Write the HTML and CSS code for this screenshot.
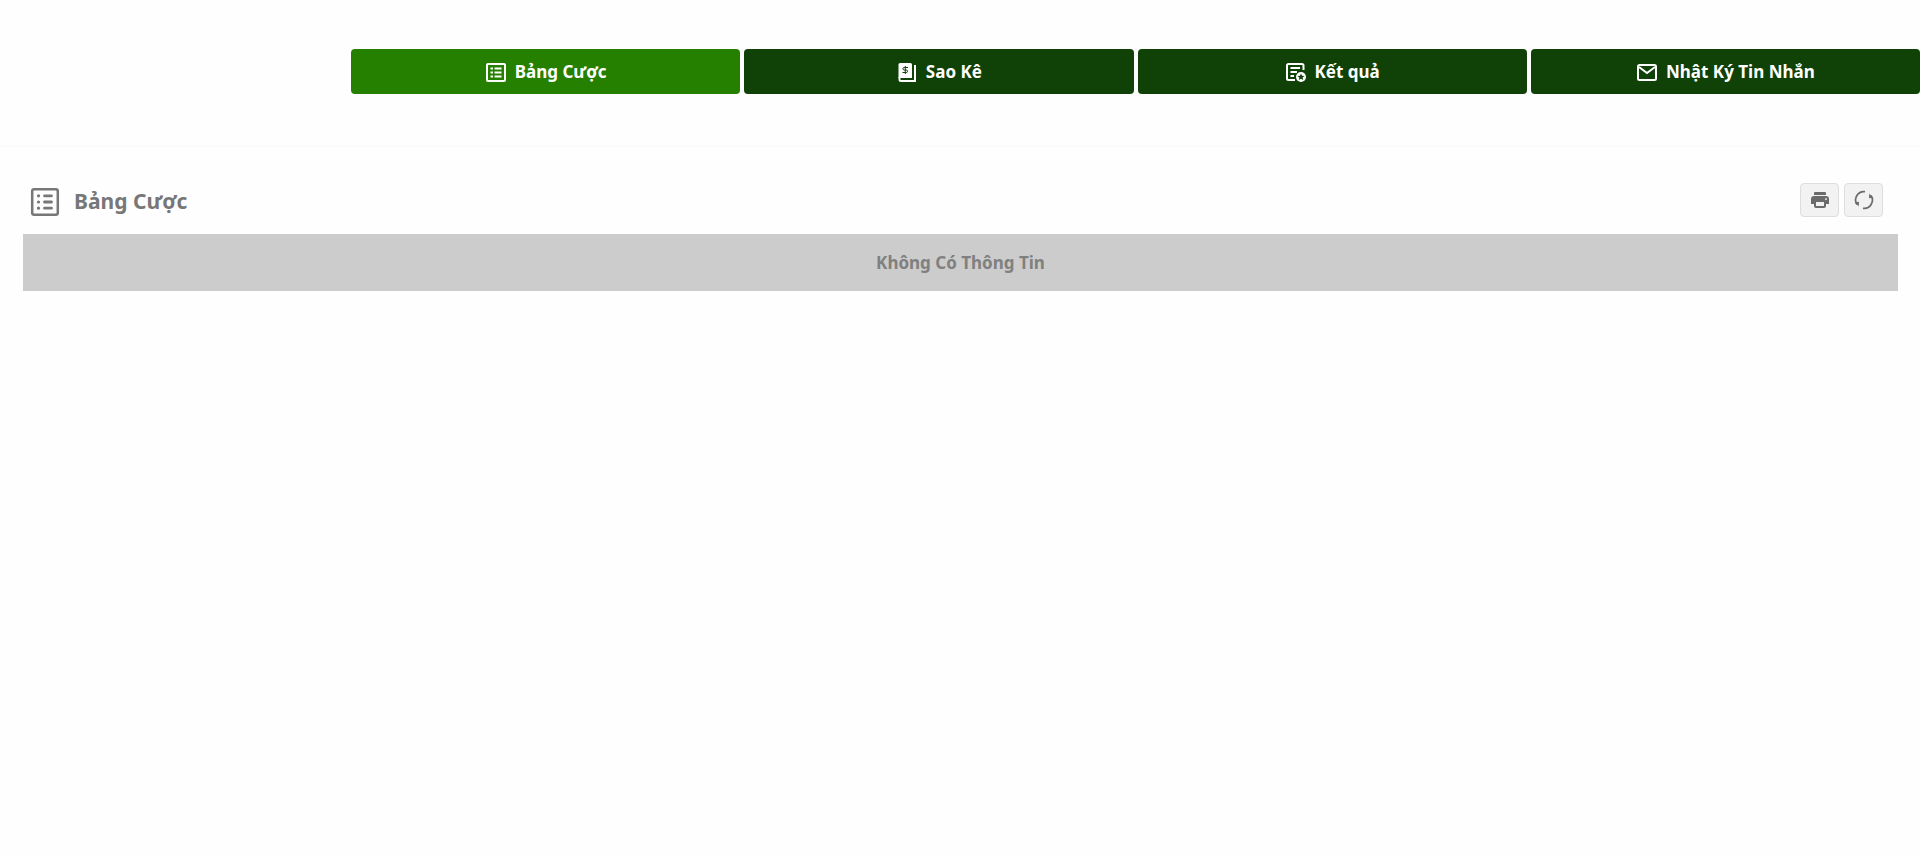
FILE: index.html
```html
<!doctype html>
<html lang="vi">
  <head>
    <meta charset="UTF-8" />
    <meta name="viewport" content="width=device-width, initial-scale=1.0" />
    <title>Bảng Cược</title>
    <link rel="stylesheet" href="styles.css">
  </head>
  <body>
    <header class="header">
      <nav class="tabs">
        <button class="tab active" type="button">
          <svg class="icon" viewBox="0 0 22 22" fill="none" stroke="currentColor" stroke-width="2">
            <rect x="2" y="3" width="18" height="17" rx="1" />
            <path d="M5.5 7.500h2.500M5.500 11.500h2.500M5.500 15.500h2.500M9.500 7.500h7M9.500 11.500h7M9.500 15.500h7" />
          </svg>
          Bảng Cược
        </button>
        <button class="tab" type="button">
          <svg class="icon" viewBox="0 0 22 22" fill="none" stroke="currentColor">
            <path d="M4 2h10.500Q16 2 16 3.500V17H2.500V3.500Q2.500 2 4 2z" fill="currentColor" stroke="none" />
            <path d="M3.500 16v2.500Q3.500 20 5 20h14V4" stroke-width="2" />
            <path class="cutout" d="M12 6.500H8.200a1.200 1.200 0 0 0 0 2.500h2.100a1.200 1.200 0 0 1 0 2.500H6.500M9.300 5v8" />
          </svg>
          Sao Kê
        </button>
        <button class="tab" type="button">
          <svg class="icon" viewBox="0 0 22 22" fill="none" stroke="currentColor" stroke-width="2">
            <path d="M10 19H3.500Q2 19 2 17.500V4.500Q2 3 3.500 3H17q1.500 0 1.500 1.500V9" />
            <path d="M5.500 7H15M5.500 11h6.500M5.500 15h3.500" />
            <circle cx="16" cy="16" r="5" fill="currentColor" stroke="none" />
            <path class="cutout-fill" d="M16 12.500l1 2.300 2.500.2-1.900 1.600.6 2.500-2.200-1.400-2.200 1.400.6-2.500-1.900-1.600 2.500-.2z" stroke="none" />
          </svg>
          Kết quả
        </button>
        <button class="tab" type="button">
          <svg class="icon" viewBox="0 0 22 22" fill="none" stroke="currentColor" stroke-width="2">
            <rect x="2" y="4" width="18" height="15" rx="1.500" />
            <path d="M3 6l8 6 8-6" />
          </svg>
          Nhật Ký Tin Nhắn
        </button>
      </nav>
    </header>

    <main class="content">
      <div class="title-bar">
        <svg class="title-icon" viewBox="0 0 30 30" fill="none" stroke="currentColor" stroke-linecap="round">
          <rect x="2.200" y="2.200" width="25.600" height="25.600" rx="2" stroke-width="2.500" />
          <path d="M8.500 8.800h.01M8.500 15h.01M8.500 21.200h.01" stroke-width="3.200" />
          <path d="M14.500 8.800h7M14.500 15h7M14.500 21.200h7" stroke-width="2.800" />
        </svg>
        <h1 class="title">Bảng Cược</h1>
        <div class="actions">
          <button class="action" type="button" aria-label="In">
            <svg viewBox="0 0 20 20" fill="currentColor">
              <path d="M5 2h10q1 0 1 1v2H4V3q0-1 1-1z" />
              <path d="M4 6h12q3 0 3 3v5h-3v2q0 2-2 2H6q-2 0-2-2v-2H1V9q0-3 3-3zM6 12v4h8v-4zM16 8.200a.9.900 0 1 0 .01 0z" fill-rule="evenodd" />
            </svg>
          </button>
          <button class="action" type="button" aria-label="Làm mới">
            <svg viewBox="0 0 20 20" fill="none" stroke="currentColor" stroke-width="1.700">
              <path d="M11 1.700A8.300 8.300 0 0 0 3 14.500" />
              <path d="M9 18.300A8.300 8.300 0 0 0 17 5.500" />
              <path d="M1 12.200l4-.4-.3 4.700zM19 7.800l-4 .4.300-4.700z" fill="currentColor" stroke="none" />
            </svg>
          </button>
        </div>
      </div>
      <p class="empty">Không Có Thông Tin</p>
    </main>
  </body>
</html>
```

FILE: styles.css
```css
* {
  box-sizing: border-box;
}
body {
  margin: 0;
  background: #fefefe;
  color: #777;
  font-family: "Noto Sans", sans-serif;
}
.header {
  padding: 49px 0 51px 351px;
  border-bottom: 2px solid #fbfbfb;
}
.tabs {
  display: grid;
  grid-template-columns: repeat(4, 1fr);
  gap: 4px;
}
.tab {
  display: flex;
  align-items: center;
  justify-content: center;
  gap: 8px;
  height: 45px;
  padding: 0;
  border: none;
  border-radius: 4px;
  background: #104106;
  color: white;
  font: bold 17px "Noto Sans", sans-serif;
  cursor: pointer;
}
.tab.active {
  background: #258000;
}
.icon {
  width: 22px;
  height: 22px;
}
.cutout {
  stroke: #104106;
}
.cutout-fill {
  fill: #104106;
}
.content {
  padding: 36px 22px 0 23px;
}
.title-bar {
  display: flex;
  align-items: flex-end;
  margin-bottom: 17px;
  padding: 0 15px 0 7px;
}
.title-icon {
  width: 30px;
  height: 30px;
}
.title {
  margin: 0 0 0 14px;
  font-size: 21px;
  line-height: 32px;
}
.actions {
  display: flex;
  gap: 5px;
  margin-left: auto;
}
.action {
  display: flex;
  align-items: center;
  justify-content: center;
  width: 39px;
  height: 34px;
  padding: 0;
  border: 1px solid #ddd;
  border-radius: 4px;
  background: #f2f2f2;
  color: #6b6b6b;
  cursor: pointer;
}
.action svg {
  width: 20px;
  height: 20px;
}
.empty {
  margin: 0;
  padding: 16px;
  background: #ccc;
  color: #808080;
  font-size: 17px;
  font-weight: bold;
  line-height: 25px;
  text-align: center;
}
```
